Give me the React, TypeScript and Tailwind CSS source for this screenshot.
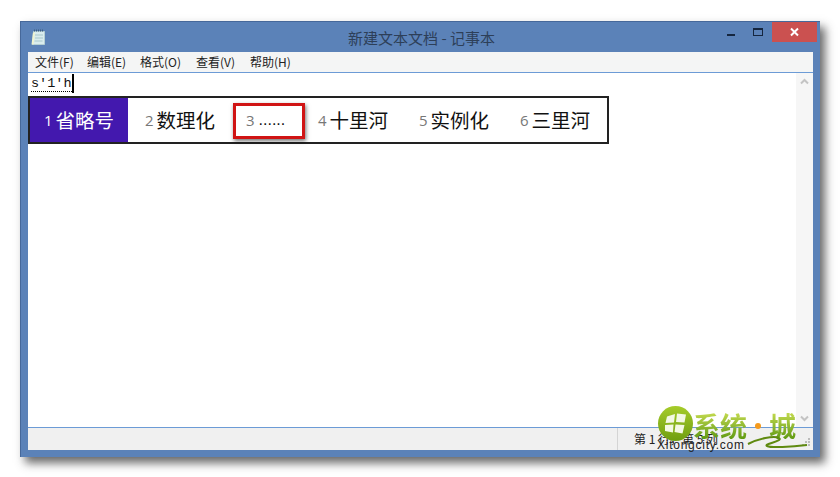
const cjk = "font-['Microsoft_YaHei','Noto_Sans_CJK_SC','Noto_Sans',sans-serif]";

const menus = [
  ["文件(F)", "w-[52px]"],
  ["编辑(E)", "w-[53px]"],
  ["格式(O)", "w-[56px]"],
  ["查看(V)", "w-[54px]"],
  ["帮助(H)", "w-[60px]"],
];

function Cand({ n, text, cls }: { n: string; text: string; cls: string }) {
  return (
    <div className={`flex items-center pb-[1px] ${cls}`}>
      <span className="text-[15px] leading-none text-[#777] font-['Open_Sans',sans-serif] mr-[3px] pt-[2px]">{n}</span>
      <span className="text-[19.5px] leading-none text-[#111]">{text}</span>
    </div>
  );
}

export default function App() {
  return (
    <div className={`relative w-[840px] h-[477px] overflow-hidden bg-white ${cjk}`}>
      <div className="relative ml-[20px] mt-[21px] w-[800px] h-[436px] flex flex-col bg-[#5b82b8] border-t border-l border-[#46689a] shadow-[5px_6px_9px_rgba(40,40,40,0.7)]">
        {/* Title bar */}
        <div className="relative h-[30px] shrink-0 flex items-center justify-center">
          <svg className="absolute left-[10px] top-[7px]" width="15" height="17" viewBox="0 0 15 17">
            <path d="M2.5 2.5h11v13h-12z" fill="#d9ecee" stroke="#b5cfd3" />
            <path d="M3 1.5h10" stroke="#3f5f80" strokeDasharray="1 1" strokeWidth="2" />
            <path d="M4 6h8M4 9h8M3.5 12h8" stroke="#a8c8cc" />
            <path d="M1.5 15.5l1.5-12" stroke="#f0f4d0" strokeWidth="2" />
          </svg>
          <span className="text-[15px] leading-none text-[#2d3f58] pl-[2px]">新建文本文档 - 记事本</span>
          <div className="absolute right-[3px] top-0 w-[45px] h-[20px] bg-[#cb5150] flex items-center justify-center">
            <svg width="11" height="10" viewBox="0 0 11 10">
              <path d="M2 1.5l7 7M9 1.5l-7 7" stroke="#fff" strokeWidth="2" />
            </svg>
          </div>
          <div className="absolute left-[706px] top-[12px] w-[8px] h-[2px] bg-[#15263f]" />
          <div className="absolute left-[732px] top-[6px] w-[10px] h-[8px] border border-t-2 border-[#15263f]" />
        </div>

        {/* Client area */}
        <div className="mx-[7px] flex-1 flex flex-col min-h-0">
          <div className="h-[20px] shrink-0 bg-[#f4f5f5] flex items-center pl-[7px] text-[12px] text-[#222]">
            {menus.map(([m, w]) => (
              <span key={m} className={`${w} whitespace-nowrap`}>{m}</span>
            ))}
          </div>
          <div className="relative flex-1 min-h-0 flex bg-white border-t border-b border-[#6c9bd6]">
            <div className="flex-1 pl-[3px] pt-[1px]">
              <div className="flex items-start h-[20px]">
                <span className="font-['Liberation_Mono',monospace] text-[13.5px] leading-[19px] text-[#111] border-b border-dotted border-black h-[18px] whitespace-pre">s'1'h</span>
                <span className="w-[2px] h-[19px] bg-black" />
              </div>
            </div>
            <div className="w-[17px] shrink-0 bg-[#f6f6f6] flex flex-col justify-between items-center py-[5px]">
              <svg width="9" height="7" viewBox="0 0 9 7"><path d="M1 5.5l3.5-3.5 3.5 3.5" fill="none" stroke="#c4c4c4" strokeWidth="2" /></svg>
              <svg width="9" height="7" viewBox="0 0 9 7"><path d="M1 1.5l3.5 3.5 3.5-3.5" fill="none" stroke="#c4c4c4" strokeWidth="2" /></svg>
            </div>
          </div>
          <div className="relative h-[22px] shrink-0 bg-[#f0f0f0] flex items-center">
            <div className="ml-[589px] h-full border-l border-[#d4d4d4] pl-[16px] flex items-center text-[12px] text-[#222] whitespace-nowrap">第 1 行，第 5 列</div>
            <svg className="absolute right-[2px] bottom-[3px]" width="10" height="10" viewBox="0 0 10 10">
              <path d="M7 1h2v2H7zM4 4h2v2H4zM7 4h2v2H7zM1 7h2v2H1zM4 7h2v2H4zM7 7h2v2H7z" fill="#bcbcbc" />
            </svg>
          </div>
        </div>
        <div className="h-[7px] shrink-0" />

        {/* IME candidate bar */}
        <div className="absolute left-[7px] top-[74px] w-[581px] h-[48px] border-2 border-[#222] bg-white flex">
          <div className="w-[98px] bg-[#4318ae] flex items-center pl-[14px] pb-[1px] text-white">
            <span className="text-[15px] leading-none font-['Open_Sans',sans-serif] mr-[3px] pt-[2px]">1</span>
            <span className="text-[19.5px] leading-none">省略号</span>
          </div>
          <Cand n="2" text="数理化" cls="pl-[17px] w-[106px]" />
          <div className="w-[70px] flex items-center pl-[12px]">
            <span className="text-[15px] leading-none text-[#777] font-['Open_Sans',sans-serif] mr-[4px]">3</span>
            <span className="text-[16px] leading-none text-[#111] font-['Liberation_Sans',sans-serif]">......</span>
          </div>
          <Cand n="4" text="十里河" cls="pl-[14px] w-[101px]" />
          <Cand n="5" text="实例化" cls="pl-[14px] w-[101px]" />
          <Cand n="6" text="三里河" cls="pl-[14px]" />
        </div>

        {/* Red annotation */}
        <div className="absolute left-[212px] top-[81px] w-[72px] h-[36px] border-[3px] border-[#d01414] shadow-[1px_2px_4px_rgba(0,0,0,0.55)]" />
      </div>

      {/* Watermark */}
      <div className="absolute left-[658px] top-[406px] w-[35px] h-[35px] rounded-full bg-gradient-to-b from-[#a6cc2a] to-[#6f9e10] flex items-center justify-center">
        <svg width="23" height="21" viewBox="0 0 23 21">
          <path d="M3 3.5l8-2.5-1 8.5-8.5 .5zM13 .5l9 1-1.5 8-8.5-.5zM1 12l8.5-.5L9 19.5 1 18zM11.5 11.5l9 .5-2 8.5-8-1.5z" fill="#f3f8e4" />
        </svg>
      </div>
      <div className="absolute left-[693px] top-[412px] flex items-center text-[27px] leading-none font-bold whitespace-nowrap">
        <span className="text-transparent bg-clip-text bg-gradient-to-b from-[#c6dc50] to-[#5f9a10]">系统</span>
        <span className="w-[6px] h-[6px] mx-[8px] rounded-full bg-[#f59a1c]" />
        <span className="text-transparent bg-clip-text bg-gradient-to-b from-[#c6dc50] to-[#5f9a10]">城</span>
      </div>
      <div className="absolute left-[657px] top-[439px] text-[12px] tracking-[0.75px] leading-none text-[#222] font-['Liberation_Sans',sans-serif] whitespace-nowrap">Xitongcity.com</div>
      <svg className="absolute left-[747px] top-[433px]" width="62" height="18" viewBox="0 0 62 18">
        <path d="M1 11c10-5 26-9 31-6s-16 6-12 8 24 1 40-1" fill="none" stroke="#5f8a10" strokeWidth="2" />
      </svg>
    </div>
  );
}
